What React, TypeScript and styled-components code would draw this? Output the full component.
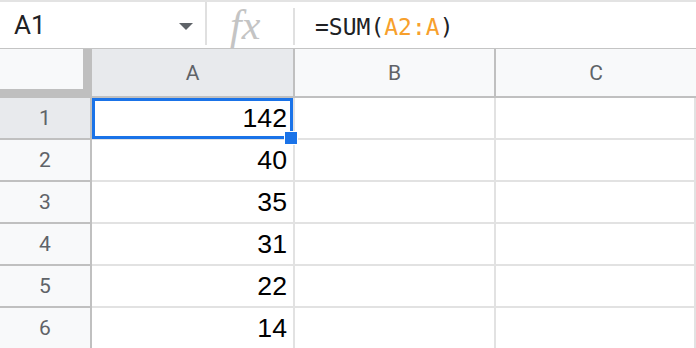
import React from "react";
import styled, { createGlobalStyle } from "styled-components";

const GlobalStyle = createGlobalStyle`
  html, body {
    margin: 0;
    padding: 0;
    background: #ffffff;
  }
  body {
    font-family: Roboto, "Liberation Sans", Arial, sans-serif;
  }
`;

const HEADER_BORDER = "#c0c0c0";
const GRID_LINE = "#e2e2e2";
const BLUE = "#1a73e8";

const Sheet = styled.div`
  width: 696px;
  height: 348px;
  overflow: hidden;
  display: flex;
  flex-direction: column;
`;

const FormulaBar = styled.div`
  height: 46px;
  flex: 0 0 auto;
  display: flex;
  align-items: stretch;
  border-top: 2px solid #e3e3e3;
  border-bottom: 1px solid #c4c4c4;
`;

const NameBox = styled.div`
  width: 205px;
  box-sizing: border-box;
  padding: 0 12px 0 14px;
  display: flex;
  align-items: center;
  justify-content: space-between;
  font-size: 26px;
  color: #202124;
`;

const Caret = styled.span`
  width: 0;
  height: 0;
  border-left: 7px solid transparent;
  border-right: 7px solid transparent;
  border-top: 7px solid #5f6368;
  margin-top: 3px;
`;

const Divider = styled.div<{ $inset: number }>`
  width: 2px;
  background: #e0e0e0;
  margin: ${(p) => p.$inset}px 0 3px;
`;

const FxSlot = styled.div`
  width: 86px;
  box-sizing: border-box;
  padding-left: 23px;
  display: flex;
  align-items: center;
  font-family: "Liberation Serif", "Times New Roman", serif;
  font-style: italic;
  font-size: 42px;
  line-height: 1;
  color: #c4c4c4;
`;

const Formula = styled.div`
  flex: 1;
  padding-left: 20px;
  display: flex;
  align-items: center;
  padding-top: 3px;
  font-family: "DejaVu Sans Mono", "Liberation Mono", monospace;
  font-size: 23px;
  color: #202124;
  white-space: pre;
`;

const RangeRef = styled.span`
  color: #f7a02c;
`;

const Grid = styled.div`
  display: grid;
  grid-template-columns: 92px 203px 201px 200px;
  grid-template-rows: 49px repeat(6, 42px);
`;

const Corner = styled.div`
  box-sizing: border-box;
  background: #f8f9fa;
  border-right: 9px solid #bfbfbf;
  border-bottom: 9px solid #bfbfbf;
`;

const ColHeader = styled.div<{ $active?: boolean; $last?: boolean }>`
  box-sizing: border-box;
  background: ${(p) => (p.$active ? "#e8eaed" : "#f8f9fa")};
  border-right: ${(p) => (p.$last ? "none" : `2px solid ${HEADER_BORDER}`)};
  border-bottom: 2px solid ${HEADER_BORDER};
  display: flex;
  align-items: center;
  justify-content: center;
  font-size: 21px;
  color: #5f6368;
`;

const RowHeader = styled.div<{ $active?: boolean }>`
  box-sizing: border-box;
  background: ${(p) => (p.$active ? "#e8eaed" : "#f8f9fa")};
  border-right: 2px solid ${HEADER_BORDER};
  border-bottom: 2px solid ${HEADER_BORDER};
  display: flex;
  align-items: center;
  justify-content: center;
  font-size: 21px;
  color: #5f6368;
`;

const Cell = styled.div`
  position: relative;
  box-sizing: border-box;
  border-right: 2px solid ${GRID_LINE};
  border-bottom: 2px solid ${GRID_LINE};
  display: flex;
  align-items: flex-end;
  justify-content: flex-end;
  padding: 0 6px 5px 0;
  font-family: "Liberation Sans", Arial, sans-serif;
  font-size: 26.67px;
  line-height: 30px;
  color: #000000;
`;

const Selection = styled.div`
  position: absolute;
  top: 0;
  left: 0;
  right: 0;
  bottom: -1px;
  border: 3px solid ${BLUE};
  pointer-events: none;
`;

const FillHandle = styled.div`
  position: absolute;
  right: -5px;
  bottom: -7px;
  width: 12px;
  height: 12px;
  background: ${BLUE};
  border: 1px solid #ffffff;
  z-index: 2;
`;

const columns = ["A", "B", "C"];
const values = [142, 40, 35, 31, 22, 14];

export default function App() {
  return (
    <>
      <GlobalStyle />
      <Sheet>
        <FormulaBar>
          <NameBox>
            <span>A1</span>
            <Caret />
          </NameBox>
          <Divider $inset={0} />
          <FxSlot>fx</FxSlot>
          <Divider $inset={6} />
          <Formula>
            =SUM(<RangeRef>A2:A</RangeRef>)
          </Formula>
        </FormulaBar>
        <Grid>
          <Corner />
          {columns.map((c, i) => (
            <ColHeader key={c} $active={i === 0} $last={i === columns.length - 1}>
              {c}
            </ColHeader>
          ))}
          {values.map((v, r) => (
            <React.Fragment key={r}>
              <RowHeader $active={r === 0}>{r + 1}</RowHeader>
              <Cell>
                {v}
                {r === 0 && (
                  <>
                    <Selection />
                    <FillHandle />
                  </>
                )}
              </Cell>
              <Cell />
              <Cell />
            </React.Fragment>
          ))}
        </Grid>
      </Sheet>
    </>
  );
}
